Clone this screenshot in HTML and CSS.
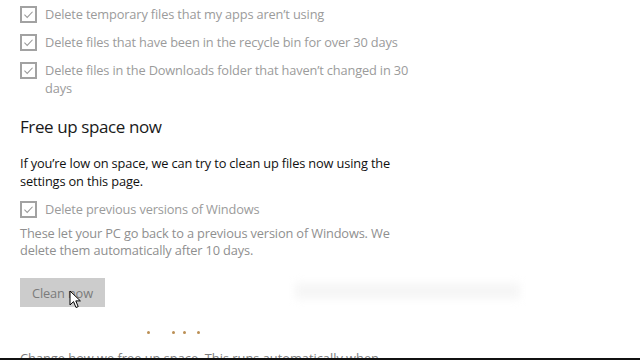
FILE: index.html
```html
<!DOCTYPE html>
<html lang="en">
<head>
    <meta charset="UTF-8">
    <meta name="viewport" content="width=device-width, initial-scale=1.0">
    <title>Storage sense</title>
    <link rel="stylesheet" href="styles.css">
</head>
<body>
    <div class="page">
        <div class="options">
            <div class="check-row">
                <span class="check-box"><svg viewBox="0 0 16 16"><path d="M3 8.2 L6.4 11.6 L13 4.6"/></svg></span>
                <span class="check-label">Delete temporary files that my apps aren’t using</span>
            </div>
            <div class="check-row">
                <span class="check-box"><svg viewBox="0 0 16 16"><path d="M3 8.2 L6.4 11.6 L13 4.6"/></svg></span>
                <span class="check-label">Delete files that have been in the recycle bin for over 30 days</span>
            </div>
            <div class="check-row">
                <span class="check-box"><svg viewBox="0 0 16 16"><path d="M3 8.2 L6.4 11.6 L13 4.6"/></svg></span>
                <span class="check-label">Delete files in the Downloads folder that haven’t changed in 30 days</span>
            </div>
        </div>

        <h2 class="section-title">Free up space now</h2>

        <p class="intro">If you’re low on space, we can try to clean up files now using the<br>settings on this page.</p>

        <div class="check-row">
            <span class="check-box"><svg viewBox="0 0 16 16"><path d="M3 8.2 L6.4 11.6 L13 4.6"/></svg></span>
            <span class="check-label">Delete previous versions of Windows</span>
        </div>

        <p class="note">These let your PC go back to a previous version of Windows. We delete them automatically after 10 days.</p>

        <div class="action-row">
            <button class="clean-btn" disabled>Clean now</button>
            <svg class="cursor" viewBox="0 0 12 19">
                <path d="M1 1 L1 15 L4.5 11.6 L7 17.5 L9.2 16.6 L6.8 10.9 L11.4 10.9 Z"/>
            </svg>
            <div class="ghost-bar"></div>
        </div>

        <div class="progress">
            <span class="dot"></span>
            <span class="dot d2"></span>
            <span class="dot d3"></span>
            <span class="dot d4"></span>
        </div>

        <p class="cut-text">Change how we free up space. This runs automatically when storage is low</p>
    </div>
    <div class="taskbar-edge"></div>
</body>
</html>
```

FILE: styles.css
```css
* {
    margin: 0;
    padding: 0;
    box-sizing: border-box;
}

html, body {
    height: 100%;
}

body {
    font-family: "Open Sans", "Noto Sans", sans-serif;
    background: #fff;
    color: #000;
    overflow: hidden;
    position: relative;
}

.page {
    padding: 5px 0 0 20px;
    width: 425px;
}

.options {
    display: flex;
    flex-direction: column;
    gap: 10px;
}

.check-row {
    display: flex;
    align-items: flex-start;
    gap: 8px;
}

.check-box {
    flex: none;
    width: 17px;
    height: 17px;
    margin-top: 1px;
    border: 2px solid #a2a2a2;
    display: flex;
    align-items: center;
    justify-content: center;
}

.check-box svg {
    width: 15px;
    height: 15px;
    fill: none;
    stroke: #9a9a9a;
    stroke-width: 1.3;
}

.check-label {
    font-size: 12.8px;
    line-height: 18px;
    color: #9b9b9b;
    letter-spacing: -0.15px;
}

.section-title {
    margin-top: 17px;
    font-size: 17px;
    line-height: 26px;
    font-weight: 400;
    color: #1a1a1a;
    letter-spacing: -0.4px;
}

.intro {
    margin-top: 14px;
    margin-bottom: 10px;
    margin-right: -40px;
    font-size: 12.8px;
    line-height: 18px;
    color: #111;
    letter-spacing: -0.15px;
}

.note {
    margin-top: 7px;
    font-size: 12.8px;
    line-height: 17px;
    color: #8f8f8f;
    letter-spacing: -0.15px;
}

.action-row {
    position: relative;
    margin-top: 19px;
    height: 29px;
}

.clean-btn {
    width: 85px;
    height: 29px;
    border: none;
    background: #cccccc;
    color: #7b7b7b;
    font-family: "Open Sans", "Noto Sans", sans-serif;
    font-size: 12.8px;
    letter-spacing: -0.15px;
}

.cursor {
    position: absolute;
    left: 49px;
    top: 12px;
    width: 12px;
    height: 19px;
    fill: #fff;
    stroke: #000;
    stroke-width: 1;
}

.ghost-bar {
    position: absolute;
    left: 275px;
    top: 5px;
    width: 225px;
    height: 16px;
    background: #f6f6f6;
    filter: blur(4px);
}

.progress {
    display: flex;
    margin: 23px 0 0 127px;
    height: 5px;
    align-items: center;
}

.dot {
    width: 3px;
    height: 3px;
    border-radius: 50%;
    background: #bb8f55;
}

.dot.d2 {
    margin-left: 22px;
}

.dot.d3 {
    margin-left: 8px;
}

.dot.d4 {
    margin-left: 11px;
}

.cut-text {
    margin-top: 14px;
    font-size: 12.8px;
    line-height: 18px;
    color: #7d7d7d;
}

.taskbar-edge {
    position: absolute;
    left: 0;
    right: 0;
    bottom: 0;
    height: 2px;
    background: #111;
}
```
